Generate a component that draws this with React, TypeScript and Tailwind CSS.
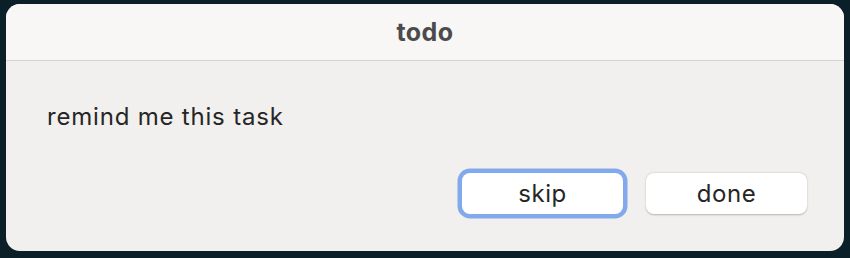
export default function App() {
  return (
    <div className="w-[850px] h-[258px] bg-[#0b1f29] pt-[4px] pl-[6px] pr-[6px] pb-[7px]" style={{ fontFamily: "Inter, 'Noto Sans', sans-serif" }}>
      <div className="w-full h-full rounded-[14px] overflow-hidden bg-[#f2f0ee] flex flex-col">
        <div className="h-[57px] shrink-0 bg-[#f8f7f5] border-b border-[#d4d3d1] flex items-center justify-center">
          <span className="text-[25px] leading-[30px] font-bold text-[#4b4b4b] tracking-[0.4px]">todo</span>
        </div>
        <div className="flex-1 flex flex-col pl-[41px] pr-[37px] pt-[41px]">
          <p className="text-[24px] leading-[29px] text-[#262626] tracking-[0.8px]">remind me this task</p>
          <div className="flex justify-end gap-[23px] mt-[42px]">
            <button className="w-[161px] h-[41px] rounded-[8px] bg-white text-[24px] leading-[29px] tracking-[0.5px] text-[#262626] ring-[4.5px] ring-[#82a9ec] shadow-[0_0.5px_1.5px_rgba(0,0,0,0.15)]">
              skip
            </button>
            <button className="w-[161px] h-[41px] rounded-[8px] bg-white text-[24px] leading-[29px] tracking-[0.5px] text-[#262626] shadow-[0_0.5px_2px_rgba(0,0,0,0.25)]">
              done
            </button>
          </div>
        </div>
      </div>
    </div>
  );
}
